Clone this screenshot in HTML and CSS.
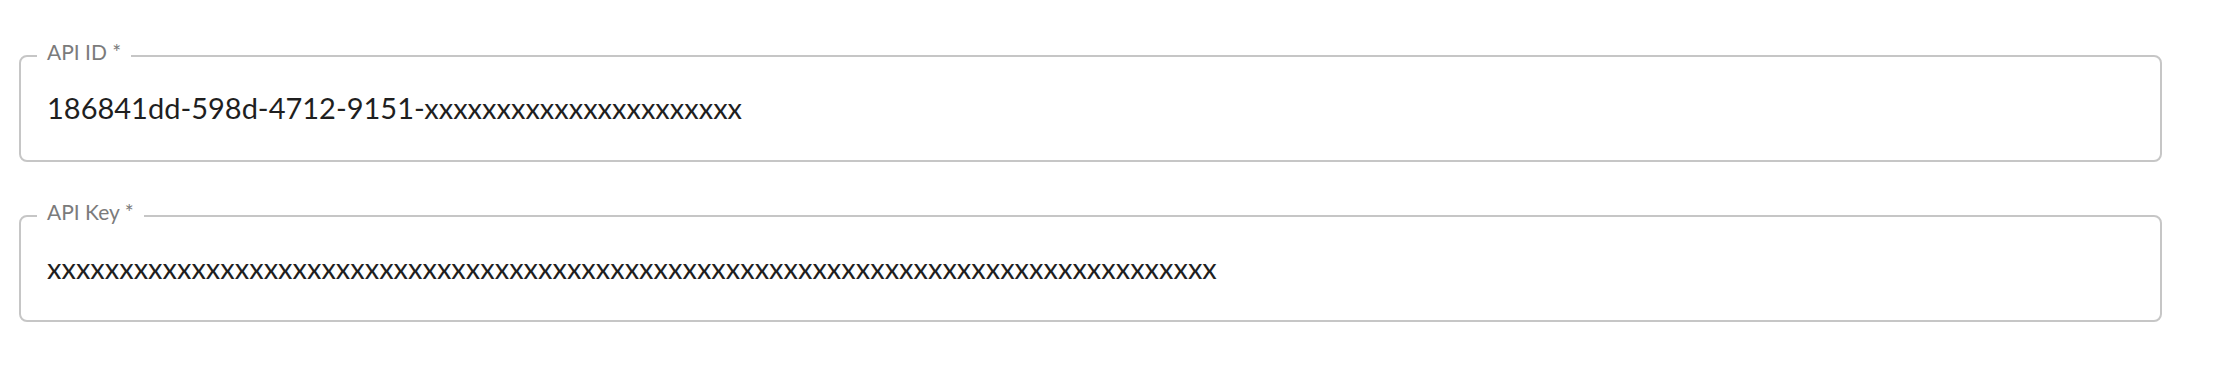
FILE: index.html
```html
<!doctype html>
<html><head>
<meta charset="utf-8">
<title>API credentials</title>
<link rel="stylesheet" href="styles.css">
</head>
<body>

<form class="creds">
	<fieldset class="field">
		<legend><span>API ID *</span></legend>
		<input type="text" name="api_id" value="186841dd-598d-4712-9151-xxxxxxxxxxxxxxxxxxxxxx">
	</fieldset>

	<fieldset class="field">
		<legend><span>API Key *</span></legend>
		<input type="text" name="api_key" value="xxxxxxxxxxxxxxxxxxxxxxxxxxxxxxxxxxxxxxxxxxxxxxxxxxxxxxxxxxxxxxxxxxxxxxxxxxxxxxxxx">
	</fieldset>
</form>

</body></html>
```

FILE: styles.css
```css
body {
	margin: 0;
	background: #fff;
	font-family: Lato, "Liberation Sans", sans-serif;
}
form.creds {
	display: flex;
	flex-direction: column;
	gap: 42px;
	padding: 44px 60px 0 19px;
}
fieldset.field {
	margin: 0;
	padding: 0 16px;
	border: 2px solid #c6c6c6;
	border-radius: 8px;
}
fieldset.field legend {
	padding: 0 10px;
	font-size: 21px;
	line-height: 24px;
	color: #7b7b7b;
}
fieldset.field legend span {
	position: relative;
	top: -4px;
}
fieldset.field input {
	display: block;
	width: 100%;
	box-sizing: border-box;
	margin: 0;
	border: 0;
	outline: none;
	background: transparent;
	padding: 22px 10px 35px;
	font-family: inherit;
	font-size: 29px;
	line-height: 35px;
	color: #1f1f1f;
}
```
